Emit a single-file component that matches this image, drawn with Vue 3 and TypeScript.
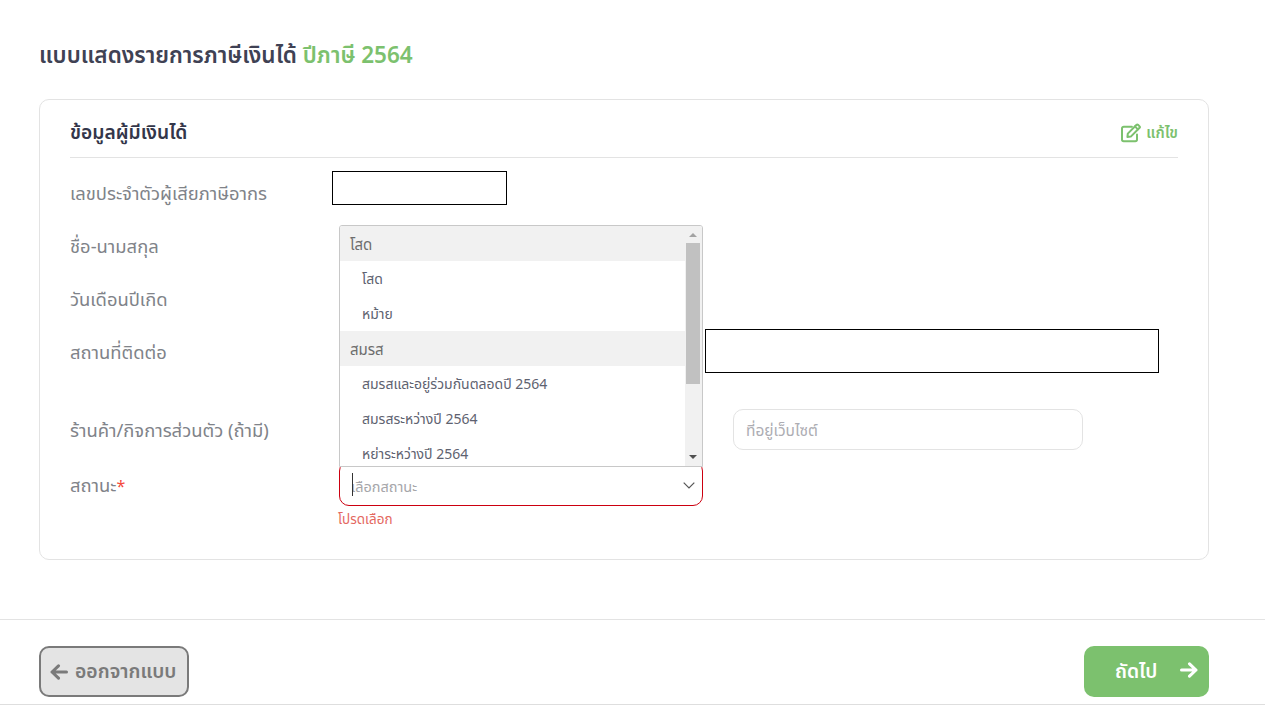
<script setup lang="ts">
interface Opt { label: string; group?: boolean }
const options: Opt[] = [
  { label: 'โสด', group: true },
  { label: 'โสด' },
  { label: 'หม้าย' },
  { label: 'สมรส', group: true },
  { label: 'สมรสและอยู่ร่วมกันตลอดปี 2564' },
  { label: 'สมรสระหว่างปี 2564' },
  { label: 'หย่าระหว่างปี 2564' },
]
</script>

<template>
  <div class="page">
    <main class="main">
      <h1 class="title">แบบแสดงรายการภาษีเงินได้ <span class="green">ปีภาษี 2564</span></h1>
      <section class="card">
        <header class="card-head">
          <h2 class="card-title">ข้อมูลผู้มีเงินได้</h2>
          <a class="edit">
            <svg class="edit-icon" viewBox="0 0 20 20" width="20" height="20" fill="none" stroke="currentColor" stroke-width="2" stroke-linejoin="round" stroke-linecap="round">
              <path d="M16 11.500V16.600a1.700 1.700 0 0 1-1.700 1.700H2.700A1.700 1.700 0 0 1 1 16.600V5.400a1.700 1.700 0 0 1 1.700-1.700h8.200" />
              <path d="M6.800 10.600 15.600 1.800a1 1 0 0 1 1.400 0l1.600 1.600a1 1 0 0 1 0 1.400L9.800 13.600l-3.400.4z" />
              <path d="M13.900 3.400l3 3" />
            </svg>
            <span>แก้ไข</span>
          </a>
        </header>

        <div class="rows">
          <div class="row">
            <label class="lbl">เลขประจำตัวผู้เสียภาษีอากร</label>
            <div class="redact redact-id"></div>
          </div>
          <div class="row"><label class="lbl">ชื่อ-นามสกุล</label></div>
          <div class="row"><label class="lbl">วันเดือนปีเกิด</label></div>
          <div class="row row-address">
            <label class="lbl">สถานที่ติดต่อ</label>
            <div class="redact redact-address"></div>
          </div>
          <div class="row row-shop">
            <label class="lbl">ร้านค้า/กิจการส่วนตัว (ถ้ามี)</label>
            <input class="web" placeholder="ที่อยู่เว็บไซต์" />
          </div>
          <div class="row row-status">
            <label class="lbl">สถานะ<span class="req">*</span></label>
            <div class="select-wrap">
              <div class="listbox">
                <ul class="list">
                  <li v-for="(o, i) in options" :key="i" :class="o.group ? 'group' : 'item'">{{ o.label }}</li>
                </ul>
                <div class="sb">
                  <span class="sb-up"></span>
                  <span class="sb-thumb"></span>
                  <span class="sb-down"></span>
                </div>
              </div>
              <div class="select">
                <span class="caret"></span>
                <span class="ph">เลือกสถานะ</span>
                <svg class="chev" viewBox="0 0 12 7" width="12" height="7" fill="none" stroke="#555" stroke-width="1.2">
                  <path d="M.7.7 6 6l5.300-5.300" />
                </svg>
              </div>
              <div class="err">โปรดเลือก</div>
            </div>
          </div>
        </div>
      </section>
    </main>

    <footer class="foot">
      <button class="btn btn-back">
        <svg viewBox="0 0 18 16" width="18" height="16" fill="none" stroke="currentColor" stroke-width="3" stroke-linecap="round" stroke-linejoin="round">
          <path d="M16.500 8H2M8.500 1.800 2 8l6.500 6.200" />
        </svg>
        <span>ออกจากแบบ</span>
      </button>
      <button class="btn btn-next">
        <span>ถัดไป</span>
        <svg class="next-arrow" viewBox="0 0 18 16" width="18" height="16" fill="none" stroke="currentColor" stroke-width="3" stroke-linecap="round" stroke-linejoin="round">
          <path d="M1.500 8H16M9.500 1.800 16 8l-6.500 6.200" />
        </svg>
      </button>
    </footer>
  </div>
</template>

<style>
html, body { margin: 0; background: #fff; }
</style>

<style scoped>
.page {
  height: 705px;
  box-sizing: border-box;
  display: flex;
  flex-direction: column;
  font-family: "Noto Sans", "Noto Sans Thai", sans-serif;
  color: #3f4254;
  border-bottom: 1px solid #dedede;
}
.main { flex: 1; padding: 36px 56px 0 39px; }
.title {
  margin: 0;
  height: 38px;
  line-height: 38px;
  font-size: 22.5px;
  font-weight: 600;
  color: #3f4254;
}
.green { color: #7cc16e; }
.card {
  margin-top: 25px;
  box-sizing: border-box;
  height: 461px;
  border: 1px solid #e3e3e3;
  border-radius: 10px;
  padding: 0 30px;
}
.card-head {
  height: 58px;
  box-sizing: border-box;
  border-bottom: 1px solid #e3e3e3;
  display: flex;
  align-items: center;
  justify-content: space-between;
  padding-top: 9px;
}
.card-title { margin: 0; font-size: 19.2px; font-weight: 600; color: #33364a; }
.edit {
  display: flex;
  align-items: center;
  gap: 5px;
  color: #7cc16e;
  font-size: 15px;
  font-weight: 600;
}
.edit-icon { display: block; }
.rows { padding-top: 9px; }
.row {
  position: relative;
  display: flex;
  align-items: center;
  height: 53px;
}
.row-shop { height: 52px; margin-top: 26px; }
.row-status { height: 60px; align-items: center; }
.row-status .lbl { margin-bottom: 2px; }
.lbl { width: 269px; flex: none; font-size: 18.4px; color: #808389; }
.req { color: #f4493c; font-size: 16px; }
.redact {
  position: absolute;
  box-sizing: border-box;
  background: #fff;
  border: 1px solid #000;
}
.redact-id { left: 262px; top: 4px; width: 175px; height: 34px; }
.redact-address { left: 635px; top: 3px; width: 454px; height: 44px; }
.web {
  position: absolute;
  left: 663px;
  top: 4px;
  box-sizing: border-box;
  width: 350px;
  height: 41px;
  border: 1px solid #e3e3e3;
  border-radius: 10px;
  padding: 1px 12px 0;
  outline: none;
  font: inherit;
  font-size: 15.5px;
}
.web::placeholder { color: #adadb3; }
.select-wrap { position: relative; width: 364px; height: 39px; margin-bottom: 2px; }
.select {
  box-sizing: border-box;
  height: 45px;
  margin-top: -6px;
  padding: 8px 0 0 11px;
  border: 1px solid #cc0010;
  border-radius: 10px;
  display: flex;
  align-items: center;
  position: relative;
  background: #fff;
}
.ph { font-size: 14.5px; color: #a6a6aa; }
.caret { position: absolute; left: 12px; top: 11px; width: 1px; height: 23px; background: #333; }
.chev { position: absolute; right: 7px; top: 20px; }
.err {
  position: absolute;
  left: -1px;
  top: 43px;
  font-size: 13.5px;
  color: #e4685f;
  white-space: nowrap;
}
.listbox {
  position: absolute;
  left: 0;
  bottom: 39px;
  box-sizing: border-box;
  width: 364px;
  height: 242px;
  background: #fff;
  border: 1px solid #c8c8c8;
  border-radius: 3px 3px 0 0;
  display: flex;
  overflow: hidden;
  z-index: 2;
}
.list { flex: 1; margin: 0; padding: 0; list-style: none; overflow: hidden; font-size: 14px; color: #5e6270; }
.group, .item { height: 35px; line-height: 35px; white-space: nowrap; }
.group { background: #f1f1f1; padding-left: 10px; color: #6d6d6d; font-size: 15px; line-height: 37px; }
.item { padding-left: 22px; }
.sb {
  width: 17px;
  flex: none;
  background: #f1f1f1;
  position: relative;
}
.sb-thumb { position: absolute; left: 1px; top: 17px; width: 14px; height: 141px; background: #c1c1c1; }
.sb-up, .sb-down {
  position: absolute;
  left: 4px;
  width: 0;
  height: 0;
  border-left: 4px solid transparent;
  border-right: 4px solid transparent;
}
.sb-up { top: 7px; border-bottom: 4px solid #a3a3a3; }
.sb-down { bottom: 7px; border-top: 4px solid #505050; }
.foot {
  height: 85px;
  box-sizing: border-box;
  border-top: 1px solid #e3e3e3;
  padding: 26px 56px 0 39px;
  display: flex;
  justify-content: space-between;
  align-items: flex-start;
}
.btn {
  box-sizing: border-box;
  height: 51px;
  display: flex;
  align-items: center;
  font: inherit;
  font-size: 19.4px;
  font-weight: 600;
  border-radius: 10px;
}
.btn-back {
  width: 150px;
  background: #e4e4e4;
  border: 2px solid #7a7a7a;
  color: #7a7a7a;
  gap: 7px;
  padding: 0 0 0 9px;
}
.btn-next {
  width: 125px;
  background: #7cc16e;
  border: none;
  color: #fff;
  justify-content: space-between;
  padding: 0 11px 0 31px;
}
.next-arrow { margin-bottom: 4px; }
</style>
